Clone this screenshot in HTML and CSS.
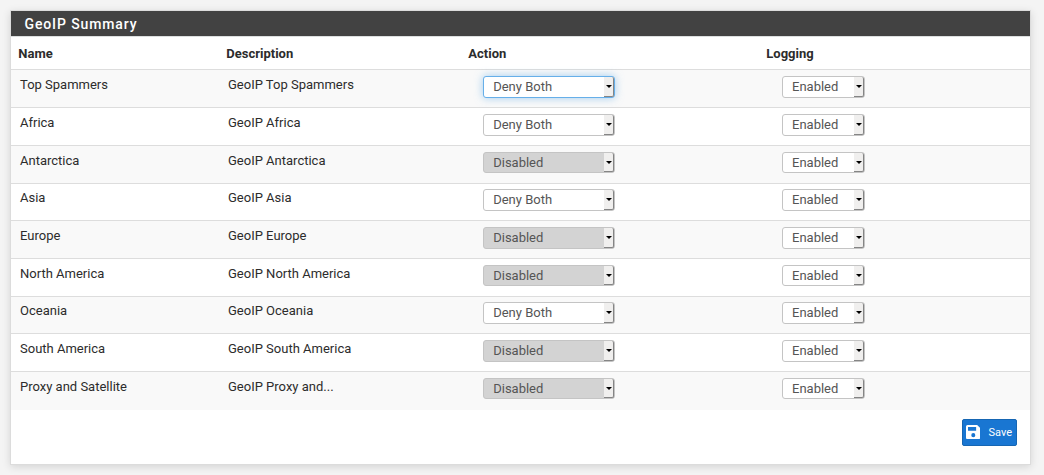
FILE: index.html
```
<!DOCTYPE html>
<html lang="en">
<head>
<meta charset="utf-8">
<title>GeoIP Summary</title>
<link rel="stylesheet" href="styles.css">
</head>
<body>
<main class="panel">
<h2 class="title">GeoIP Summary</h2>
<div class="head"><span>Name</span><span>Description</span><span>Action</span><span>Logging</span></div>
<div class="rows" id="rows"></div>
<div class="actions">
<button class="save" type="button"><svg class="disk" viewBox="0 0 14 14"><path fill-rule="evenodd" d="M1.5 0H11L14 3V12.5Q14 14 12.5 14H1.5Q0 14 0 12.5V1.5Q0 0 1.5 0ZM2 2V5.7H10V2ZM7.2 8A2 2 0 1 0 7.2 12A2 2 0 1 0 7.2 8Z"/></svg><span>Save</span></button>
</div>
</main>
<script src="main.js"></script>
</body>
</html>
```
FILE: styles.css
```
* { box-sizing: border-box; }
body {
  margin: 0;
  height: 475px;
  padding: 10px 13px 10px 10px;
  overflow: hidden;
  background: #f4f4f4;
  color: #2c2c2c;
  font: 13px/18px Roboto, sans-serif;
}
.panel {
  height: 455px;
  border: 1px solid #dcdcdc;
  background: #fff;
  box-shadow: 0 2px 8px rgba(0, 0, 0, .13);
}
.title {
  margin: 0;
  height: 26px;
  padding-left: 13.5px;
  border-bottom: 1px solid #dcdfdf;
  background: #424242;
  color: #fff;
  font-size: 14px;
  font-weight: 500;
  line-height: 26px;
  letter-spacing: .88px;
}
.head, .row {
  display: grid;
  grid-template-columns: 208px 242px 298px 1fr;
}
.head {
  height: 32.45px;
  padding: 8px 0 0 7.3px;
  font-weight: 700;
}
.row {
  height: 37.7px;
  padding: 5.9px 0 0 9px;
  border-top: 1px solid #ddd;
}
.row:nth-child(odd) { background: #f9f9f9; }
.row:last-child { height: 38.6px; }
.select {
  display: flex;
  justify-content: space-between;
  width: 132px;
  height: 21.6px;
  margin-left: 13px;
  padding-left: 9.2px;
  border: 1px solid #c4c4c4;
  border-radius: 3px;
  background: #fff;
  color: #555;
  line-height: 20px;
}
.logging { width: 83px; margin-left: 14px; padding-left: 9px; }
.disabled { background: #d3d3d3; }
.focused {
  border-color: #66afe9;
  box-shadow: 0 0 8px rgba(102, 175, 233, .6);
}
.arrow {
  display: flex;
  align-items: center;
  justify-content: center;
  width: 10px;
  border-right: 1px solid #858585;
  border-bottom: 1px solid #858585;
  border-radius: 0 2px 2px 0;
  background: #f0efee;
}
.arrow::before {
  content: "";
  border: 3px solid transparent;
  border-top-color: #000;
  border-bottom: 0;
}
.actions {
  display: flex;
  justify-content: flex-end;
  padding: 9px 13px 0 0;
}
.save {
  display: flex;
  align-items: center;
  gap: 8px;
  width: 55px;
  height: 27px;
  padding: 0 0 0 3.3px;
  border: 1px solid #1666b3;
  border-radius: 2px;
  background: #1976d2;
  color: #fff;
  font: 11px Roboto, sans-serif;
}
.disk { width: 14.2px; height: 14.2px; fill: #fff; }
```
FILE: main.js
```
const rows = [
  ["Top Spammers", "GeoIP Top Spammers", true],
  ["Africa", "GeoIP Africa", true],
  ["Antarctica", "GeoIP Antarctica", false],
  ["Asia", "GeoIP Asia", true],
  ["Europe", "GeoIP Europe", false],
  ["North America", "GeoIP North America", false],
  ["Oceania", "GeoIP Oceania", true],
  ["South America", "GeoIP South America", false],
  ["Proxy and Satellite", "GeoIP Proxy and...", false]
];
document.getElementById("rows").innerHTML = rows.map(([name, description, deny], i) => `
  <div class="row"><span>${name}</span><span>${description}</span>
    <div class="select ${deny ? "" : "disabled"} ${i === 0 ? "focused" : ""}"><span>${deny ? "Deny Both" : "Disabled"}</span><i class="arrow"></i></div>
    <div class="select logging"><span>Enabled</span><i class="arrow"></i></div>
  </div>`).join("");
```
